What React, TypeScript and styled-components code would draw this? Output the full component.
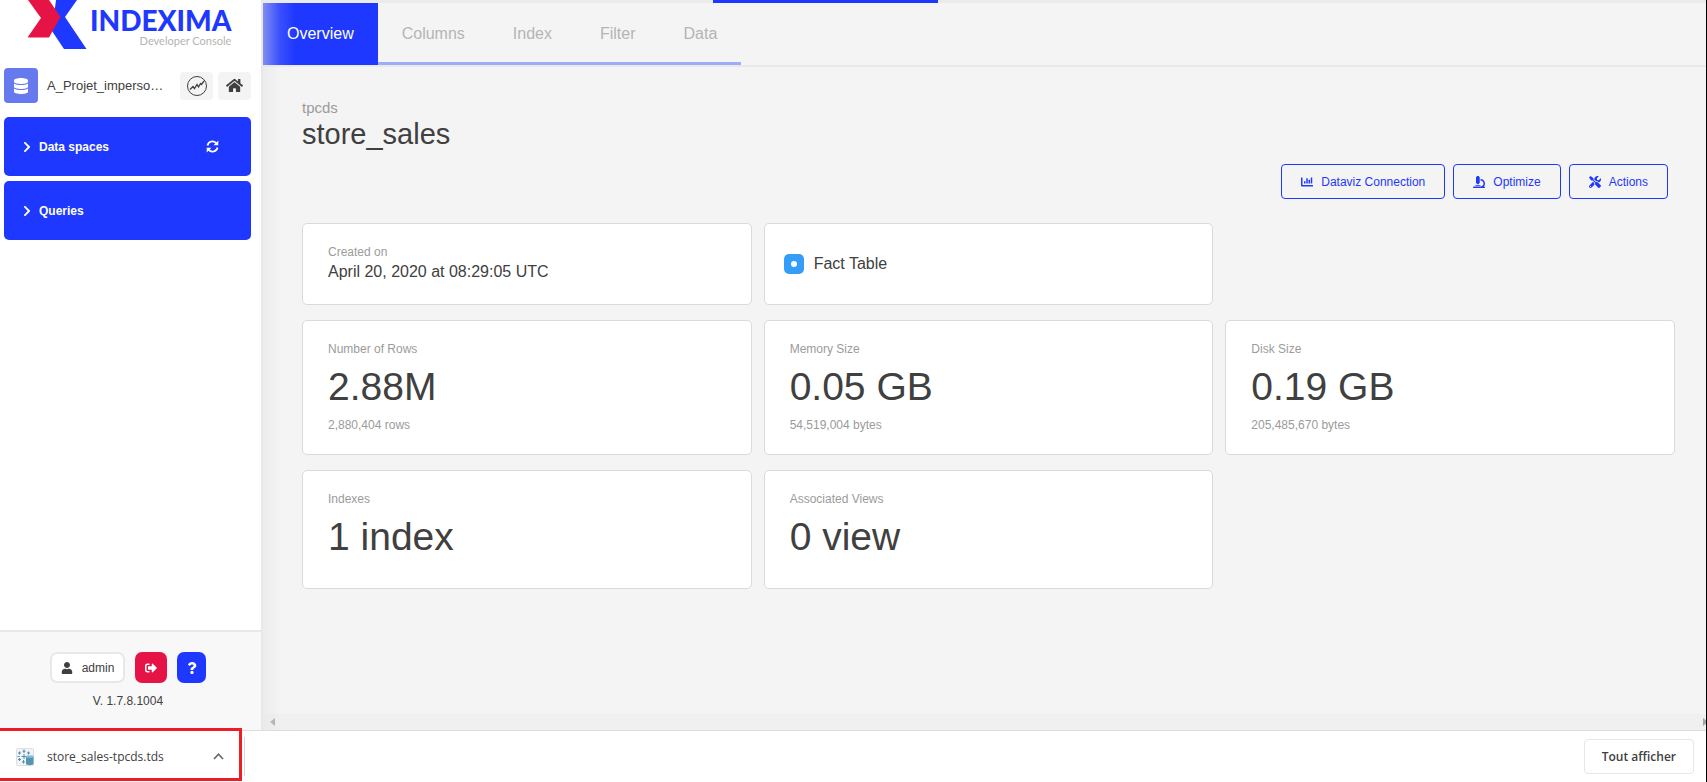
import React from "react";
import styled, { createGlobalStyle, css } from "styled-components";
import {
  FaChartBar,
  FaChevronRight,
  FaDatabase,
  FaHome,
  FaMicroscope,
  FaQuestion,
  FaSignOutAlt,
  FaTools,
  FaUser,
} from "react-icons/fa";

const BLUE = "#1f38ff";
const RED = "#e61446";
const TEXT = "#404040";
const MUTED = "#9b9b9b";
const LINE = "#e8e8e8";

const GlobalStyle = createGlobalStyle`
  *, *::before, *::after { box-sizing: border-box; }
  body {
    margin: 0;
    background: #fff;
    color: ${TEXT};
    font-family: "Liberation Sans", Arial, sans-serif;
    font-size: 12px;
  }
  button { font: inherit; color: inherit; cursor: pointer; }
  h1, p { margin: 0; font-weight: 400; }
`;

const Page = styled.div`
  display: flex;
  flex-direction: column;
  min-height: 100vh;
  border-right: 1px solid #000;
`;

const Workspace = styled.div`
  flex: 1;
  display: grid;
  grid-template-columns: 263px minmax(0, 1fr);
`;

/* ---------- Sidebar ---------- */

const Sidebar = styled.aside`
  display: flex;
  flex-direction: column;
  border-right: 2px solid ${LINE};
`;

const Brand = styled.div`
  display: flex;
  height: 50px;
  padding-left: 28px;
`;

const Wordmark = styled.div`
  display: flex;
  flex-direction: column;
  align-items: flex-end;
  padding-top: 6px;
  margin-left: 3px;
  font-family: Lato, sans-serif;
`;

const BrandName = styled.strong`
  color: ${BLUE};
  font-size: 28px;
  line-height: 28px;
  font-weight: 900;
`;

const BrandTag = styled.span`
  color: #b4b4b4;
  font-size: 11px;
  line-height: 13px;
`;

const SpaceRow = styled.div`
  display: flex;
  align-items: center;
  gap: 5px;
  margin: 18px 10px 14px 4px;
`;

const SpaceIcon = styled.span`
  display: grid;
  place-items: center;
  width: 34px;
  height: 35px;
  border-radius: 4px;
  background: #667aee;
  color: #fff;
  font-size: 16px;
`;

const SpaceName = styled.span`
  flex: 1;
  padding-left: 4px;
  font-size: 13px;
`;

const IconButton = styled.button`
  display: grid;
  place-items: center;
  width: 33px;
  height: 28px;
  padding: 0;
  border: 0;
  border-radius: 4px;
  background: #f4f4f4;
  font-size: 17px;
`;

const Menu = styled.nav`
  display: flex;
  flex-direction: column;
  gap: 5px;
  margin: 0 10px 0 4px;
`;

const MenuItem = styled.div`
  display: flex;
  align-items: center;
  height: 59px;
  padding: 0 32px 0 17px;
  border-radius: 5px;
  background: ${BLUE};
  color: #fff;
`;

const MenuToggle = styled.button`
  flex: 1;
  display: flex;
  align-items: center;
  gap: 6px;
  padding: 0;
  border: 0;
  background: none;
  text-align: left;
  font-weight: 700;
`;

const RefreshButton = styled.button`
  display: grid;
  padding: 0;
  border: 0;
  background: none;
`;

const SidebarFooter = styled.footer`
  display: flex;
  flex-direction: column;
  align-items: center;
  gap: 11px;
  height: 100px;
  margin-top: auto;
  padding-top: 20px;
  padding-right: 5px;
  border-top: 2px solid ${LINE};
  background: #f8f8f8;
`;

const AccountRow = styled.div`
  display: flex;
  gap: 10px;
`;

const accountButton = css`
  display: flex;
  align-items: center;
  justify-content: center;
  height: 31px;
  border-radius: 7px;
`;

const UserButton = styled.button`
  ${accountButton}
  gap: 9px;
  width: 75px;
  padding: 0;
  border: 2px solid ${LINE};
  background: #fff;
`;

const SquareButton = styled.button<{ $color: string; $width: number }>`
  ${accountButton}
  width: ${(p) => p.$width}px;
  padding: 0;
  border: 0;
  background: ${(p) => p.$color};
  color: #fff;
`;

/* ---------- Main panel ---------- */

const Main = styled.main`
  position: relative;
  display: flex;
  flex-direction: column;
  background: #f4f4f4;

  &::after {
    content: "";
    position: absolute;
    inset: 3px auto 0 0;
    width: 32px;
    background: linear-gradient(to right, rgba(228, 228, 228, 0.5), rgba(236, 236, 236, 0.14) 50%, rgba(240, 240, 240, 0));
    pointer-events: none;
  }
`;

const LoadingTrack = styled.div`
  height: 3px;
  background: #ebebeb;
`;

const LoadingBar = styled.div`
  width: 225px;
  height: 3px;
  margin-left: 450px;
  background: ${BLUE};
`;

const TabBar = styled.nav`
  display: flex;
  height: 64px;
  border-bottom: 2px solid #e9e9e9;
`;

const Tab = styled.button<{ $active?: boolean }>`
  padding: 3px 24px 0;
  border: 0;
  border-bottom: 3px solid ${(p) => (p.$active ? BLUE : "#9fabfb")};
  background: ${(p) => (p.$active ? BLUE : "transparent")};
  color: ${(p) => (p.$active ? "#fff" : "#b4b4b4")};
  font-size: 16px;
`;

const Content = styled.section`
  flex: 1;
  padding: 32px 31px 32px 39px;
`;

const Schema = styled.p`
  color: ${MUTED};
  font-size: 15px;
  line-height: 18px;
`;

const Title = styled.h1`
  font-size: 29px;
  line-height: 34px;
`;

const Actions = styled.div`
  display: flex;
  justify-content: flex-end;
  gap: 8px;
  margin: 13px 7px 24px 0;
`;

const ActionButton = styled.button`
  display: flex;
  align-items: center;
  gap: 8px;
  height: 35px;
  padding: 0 19px;
  border: 1px solid ${BLUE};
  border-radius: 4px;
  background: transparent;
  color: ${BLUE};
`;

const Cards = styled.div`
  display: grid;
  grid-template-columns: repeat(3, minmax(0, 1fr));
  gap: 15px 12px;
`;

const Card = styled.div<{ $column?: number }>`
  grid-column: ${(p) => p.$column ?? "auto"};
  padding: 20px 24px 21px 25px;
  border: 1px solid #dadada;
  border-radius: 5px;
  background: #fff;
`;

const FactCard = styled(Card)`
  display: flex;
  align-items: center;
  gap: 10px;
  padding-left: 19px;
  font-size: 16px;
`;

const FactBadge = styled.span`
  display: grid;
  place-items: center;
  width: 20px;
  height: 20px;
  border-radius: 5px;
  background: #349df7;

  &::after {
    content: "";
    width: 6px;
    height: 6px;
    border-radius: 50%;
    background: #fff;
  }
`;

const Label = styled.p`
  color: ${MUTED};
  line-height: 16px;
`;

const DateValue = styled.p`
  font-size: 16px;
  line-height: 23px;
`;

const BigValue = styled.p`
  font-size: 39px;
  line-height: 60px;
`;

const ScrollTrack = styled.div`
  display: flex;
  align-items: center;
  justify-content: space-between;
  height: 16px;
  padding-left: 7px;
  background: #f0f0f0;
  color: #a4a4a4;
`;

/* ---------- Download shelf ---------- */

const Shelf = styled.footer`
  position: relative;
  display: flex;
  align-items: center;
  justify-content: space-between;
  height: 52px;
  padding-right: 12px;
  border-top: 1px solid #dcdce0;
  background: #fff;
  font-family: "Open Sans", "Noto Sans", sans-serif;
  font-size: 12px;
`;

const Download = styled.button`
  display: flex;
  align-items: center;
  gap: 13px;
  width: 245px;
  height: 39px;
  padding: 0 20px 0 16px;
  border: 0;
  border-right: 1px solid #d8d8d8;
  background: none;
  text-align: left;
`;

const DownloadName = styled.span`
  flex: 1;
`;

const Highlight = styled.div`
  position: absolute;
  top: -3px;
  left: -3px;
  width: 245px;
  height: 53px;
  border: 3px solid #ee1c25;
  pointer-events: none;
`;

const ShowAll = styled.button`
  height: 35px;
  padding: 0 17px;
  border: 1px solid #e6e6e8;
  border-radius: 4px;
  background: #fff;
  font-weight: 600;
`;

const LogoMark = () => (
  <svg width="59" height="50" viewBox="28 0 59 50" aria-hidden="true">
    <path d="M56 0H77L65 17L86.500 49H64L52 31Z" fill={BLUE} />
    <path d="M28 0H49L60.500 17L49 37.500H27.500L41 18Z" fill={RED} />
  </svg>
);

const TrendIcon = () => (
  <svg width="22" height="22" viewBox="0 0 22 22" fill="none" stroke={TEXT} aria-hidden="true">
    <circle cx="11" cy="11" r="9.500" strokeWidth="1" />
    <path d="M4 14.500L7 11.500L8.500 13.500L11 9.500L12.500 12L14.500 8.500L15.500 9.500L18 6" strokeWidth="1.300" />
  </svg>
);

const RefreshIcon = () => (
  <svg width="13" height="13" viewBox="0 0 13 13" fill="none" stroke="#fff" strokeWidth="1.700" aria-hidden="true">
    <path d="M1.500 5.500A5 5 0 0 1 10.500 3.500M11.500 7.500A5 5 0 0 1 2.500 9.500" />
    <path d="M12.300 .5V5.300H7.500ZM.7 12.500V7.700H5.500Z" fill="#fff" stroke="none" />
  </svg>
);

const FileIcon = () => (
  <svg width="18" height="18" viewBox="0 0 18 18" aria-hidden="true">
    <rect x=".5" y=".5" width="17" height="17" rx="1" fill="#f1f3f5" stroke="#dde0e3" />
    <path
      d="M8 1.500V5M6.500 3.200H9.500M8 6V11M5.500 8.500H10.500M3.500 3.500V6.500M2 5H5M12.500 3.500V6.500M11 5H14M3.500 10V13M2 11.500H5M7.500 12V15.500M6 14H9M1.500 8.500H3.500"
      stroke="#4d8fb5"
      strokeWidth="1"
    />
    <path d="M10 8.500V16C10 17.500 17.500 17.500 17.500 16V8.500Z" fill="#5596b5" />
    <ellipse cx="13.750" cy="8.500" rx="3.750" ry="1.300" fill="#8dbdd2" />
  </svg>
);

const CaretUp = () => (
  <svg width="11" height="7" viewBox="0 0 11 7" fill="none" stroke="#666" strokeWidth="1.600" aria-hidden="true">
    <path d="M1 6L5.500 1.200L10 6" />
  </svg>
);

const Metric = ({ label, value, note }: { label: string; value: string; note?: string }) => (
  <>
    <Label>{label}</Label>
    <BigValue>{value}</BigValue>
    {note && <Label>{note}</Label>}
  </>
);

export default function App() {
  return (
    <Page>
      <GlobalStyle />
      <Workspace>
        <Sidebar>
          <Brand>
            <LogoMark />
            <Wordmark>
              <BrandName>INDEXIMA</BrandName>
              <BrandTag>Developer Console</BrandTag>
            </Wordmark>
          </Brand>
          <SpaceRow>
            <SpaceIcon><FaDatabase /></SpaceIcon>
            <SpaceName>A_Projet_imperso…</SpaceName>
            <IconButton aria-label="Activity"><TrendIcon /></IconButton>
            <IconButton aria-label="Home"><FaHome /></IconButton>
          </SpaceRow>
          <Menu>
            <MenuItem>
              <MenuToggle><FaChevronRight size={12} />Data spaces</MenuToggle>
              <RefreshButton aria-label="Refresh"><RefreshIcon /></RefreshButton>
            </MenuItem>
            <MenuItem>
              <MenuToggle><FaChevronRight size={12} />Queries</MenuToggle>
            </MenuItem>
          </Menu>
          <SidebarFooter>
            <AccountRow>
              <UserButton><FaUser />admin</UserButton>
              <SquareButton $color={RED} $width={32} aria-label="Sign out"><FaSignOutAlt /></SquareButton>
              <SquareButton $color={BLUE} $width={29} aria-label="Help"><FaQuestion /></SquareButton>
            </AccountRow>
            <span>V. 1.7.8.1004</span>
          </SidebarFooter>
        </Sidebar>

        <Main>
          <LoadingTrack><LoadingBar /></LoadingTrack>
          <TabBar>
            <Tab $active>Overview</Tab>
            <Tab>Columns</Tab>
            <Tab>Index</Tab>
            <Tab>Filter</Tab>
            <Tab>Data</Tab>
          </TabBar>
          <Content>
            <Schema>tpcds</Schema>
            <Title>store_sales</Title>
            <Actions>
              <ActionButton><FaChartBar />Dataviz Connection</ActionButton>
              <ActionButton><FaMicroscope />Optimize</ActionButton>
              <ActionButton><FaTools />Actions</ActionButton>
            </Actions>
            <Cards>
              <Card>
                <Label>Created on</Label>
                <DateValue>April 20, 2020 at 08:29:05 UTC</DateValue>
              </Card>
              <FactCard><FactBadge />Fact Table</FactCard>
              <Card $column={1}><Metric label="Number of Rows" value="2.88M" note="2,880,404 rows" /></Card>
              <Card><Metric label="Memory Size" value="0.05 GB" note="54,519,004 bytes" /></Card>
              <Card><Metric label="Disk Size" value="0.19 GB" note="205,485,670 bytes" /></Card>
              <Card><Metric label="Indexes" value="1 index" /></Card>
              <Card><Metric label="Associated Views" value="0 view" /></Card>
            </Cards>
          </Content>
          <ScrollTrack>
            <svg width="5" height="8" viewBox="0 0 5 8" aria-hidden="true"><path d="M5 0V8L0 4Z" fill="currentColor" /></svg>
            <svg width="3" height="8" viewBox="0 0 3 8" aria-hidden="true"><path d="M0 0V8L5 4Z" fill="currentColor" /></svg>
          </ScrollTrack>
        </Main>
      </Workspace>

      <Shelf>
        <Download>
          <FileIcon />
          <DownloadName>store_sales-tpcds.tds</DownloadName>
          <CaretUp />
        </Download>
        <ShowAll>Tout afficher</ShowAll>
        <Highlight />
      </Shelf>
    </Page>
  );
}
